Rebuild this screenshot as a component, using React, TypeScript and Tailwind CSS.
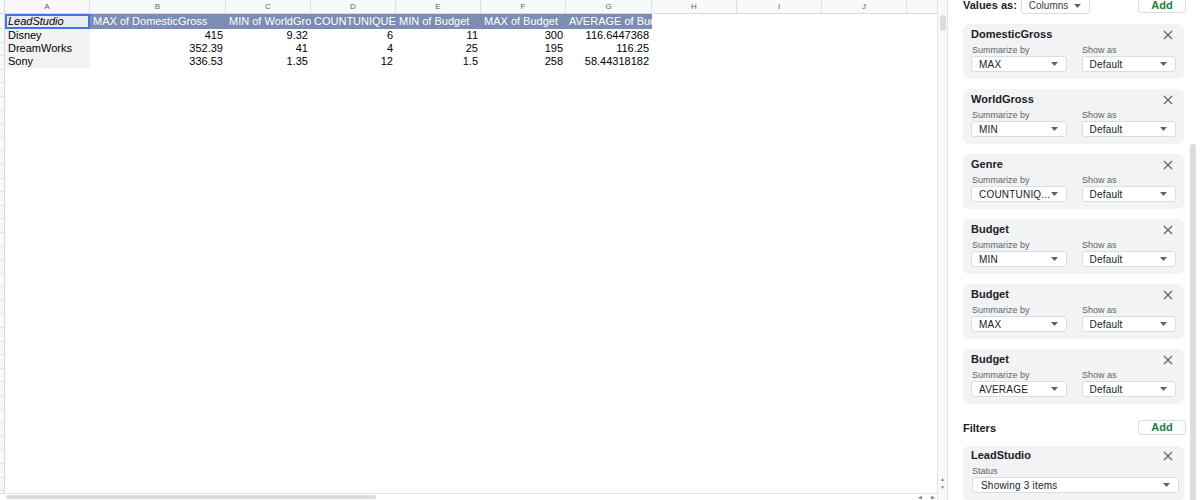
import React from "react";

const font = { fontFamily: '"Liberation Sans", Arial, sans-serif' };

const columns = [
  { label: "A", w: "w-[85px]" },
  { label: "B", w: "w-[136px]" },
  { label: "C", w: "w-[85px]" },
  { label: "D", w: "w-[85px]" },
  { label: "E", w: "w-[85px]" },
  { label: "F", w: "w-[85px]" },
  { label: "G", w: "w-[86px]" },
  { label: "H", w: "w-[85px]" },
  { label: "I", w: "w-[85px]" },
  { label: "J", w: "w-[85px]" },
];

const headers = [
  "MAX of DomesticGross",
  "MIN of WorldGross",
  "COUNTUNIQUE of Genre",
  "MIN of Budget",
  "MAX of Budget",
  "AVERAGE of Budget",
];

const rows = [
  ["Disney", "415", "9.32", "6", "11", "300", "116.6447368"],
  ["DreamWorks", "352.39", "41", "4", "25", "195", "116.25"],
  ["Sony", "336.53", "1.35", "12", "1.5", "258", "58.44318182"],
];

const values = [
  ["DomesticGross", "MAX"],
  ["WorldGross", "MIN"],
  ["Genre", "COUNTUNIQ..."],
  ["Budget", "MIN"],
  ["Budget", "MAX"],
  ["Budget", "AVERAGE"],
];

function Caret() {
  return (
    <svg width="7" height="4" viewBox="0 0 7 4" className="shrink-0">
      <path d="M0 0h7L3.5 4z" fill="#5f6368" />
    </svg>
  );
}

function Close() {
  return (
    <svg width="10" height="10" viewBox="0 0 10 10" className="shrink-0">
      <path d="M1 1l8 8M9 1l-8 8" stroke="#5f6368" strokeWidth="1.2" />
    </svg>
  );
}

function Select({ text, className }: { text: string; className: string }) {
  return (
    <div
      className={`flex h-[16px] items-center justify-between rounded-[3px] border border-[#dadce0] bg-white pl-[7px] pr-[8px] text-[10px] text-[#202124] ${className}`}
    >
      <span className="truncate tracking-[0.2px]">{text}</span>
      <Caret />
    </div>
  );
}

function ValueCard({ title, fn }: { title: string; fn: string }) {
  return (
    <div className="h-[55px] w-[221px] rounded-[6px] bg-[#f1f3f4] pl-[8px] pr-[8px] pt-[4px]">
      <div className="flex h-[13px] items-center justify-between pr-[3px]">
        <span className="text-[11px] font-bold text-[#202124]">{title}</span>
        <Close />
      </div>
      <div className="mt-[4px] flex h-[10px] text-[9px] leading-[10px] text-[#5f6368]">
        <span className="w-[111px] pl-[1px]">Summarize by</span>
        <span>Show as</span>
      </div>
      <div className="mt-[1px] flex">
        <Select text={fn} className="w-[96px]" />
        <Select text="Default" className="ml-[15px] w-[95px]" />
      </div>
    </div>
  );
}

function Grid() {
  return (
    <div className="flex h-full w-[937px] flex-col overflow-hidden">
      <div className="flex h-[14px] shrink-0 border-b border-[#d9d9d9] bg-[#f8f9fa]">
        <div className="w-[5px] shrink-0 border-r border-[#d9d9d9]" />
        {columns.map((c) => (
          <div
            key={c.label}
            className={`${c.w} flex shrink-0 items-center justify-center border-r border-[#e0e0e0] text-[8px] text-[#5f6368]`}
          >
            {c.label}
          </div>
        ))}
        <div className="flex-1" />
      </div>
      <div className="flex min-h-0 flex-1">
        <div className="flex w-[5px] shrink-0 flex-col border-r border-[#d9d9d9] bg-[#f8f9fa]">
          <div className="h-[15px] shrink-0 border-b border-[#e1e1e1]" />
          {Array.from({ length: 34 }).map((_, i) => (
            <div key={i} className="h-[13.6px] shrink-0 border-b border-[#e1e1e1]" />
          ))}
        </div>
        <div className="flex-1 bg-white text-[11px] text-black">
          <div className="flex h-[15px]">
            <div className="flex w-[85px] shrink-0 items-center border-2 border-[#3b78e7] bg-[#e8ebf2] pl-[1px] italic">
              LeadStudio
            </div>
            {headers.map((h, i) => (
              <div
                key={h}
                className={`${columns[i + 1].w} flex shrink-0 items-center overflow-hidden whitespace-nowrap bg-[#7b8db3] pl-[3px] text-white`}
              >
                {h}
              </div>
            ))}
          </div>
          {rows.map((r) => (
            <div key={r[0]} className="flex h-[13px]">
              <div className="flex w-[85px] shrink-0 items-center bg-[#f3f3f3] pl-[3px]">{r[0]}</div>
              {r.slice(1).map((v, i) => (
                <div
                  key={i}
                  className={`${columns[i + 1].w} flex shrink-0 items-center justify-end pr-[3px]`}
                >
                  {v}
                </div>
              ))}
            </div>
          ))}
        </div>
      </div>
      <div className="flex h-[7px] shrink-0 items-center border-t border-[#e3e3e3] bg-white pl-[6px]">
        <div className="h-[4px] w-[370px] rounded-full bg-[#dadce0]" />
        <div className="flex-1" />
        <div className="mr-[2px] flex gap-[9px] text-[5px] leading-none text-[#80868b]">
          <span>◀</span>
          <span>▶</span>
        </div>
      </div>
    </div>
  );
}

export default function App() {
  return (
    <div className="flex h-[500px] w-[1200px] overflow-hidden bg-white" style={font}>
      <Grid />
      <div className="flex h-full w-[11px] shrink-0 flex-col items-center border-l border-r border-[#e3e3e3] bg-[#f8f9fa]">
        <div className="mt-[15px] h-[16px] w-[6px] rounded-full bg-[#dadce0]" />
        <div className="flex-1" />
        <div className="mb-[10px] flex flex-col gap-[3px] text-[5px] leading-none text-[#80868b]">
          <span>▲</span>
          <span>▼</span>
        </div>
      </div>
      <div className="flex flex-1 overflow-hidden">
        <div className="flex w-[238px] shrink-0 flex-col pl-[15px]">
          <div className="-mt-[3px] flex h-[17px] items-center">
            <span className="text-[11px] font-bold text-[#202124]">Values as:</span>
            <div className="ml-[4px] flex h-[17px] w-[69px] items-center justify-between rounded-[3px] border border-[#dadce0] pl-[7px] pr-[8px] text-[10px] text-[#3c4043]">
              <span>Columns</span>
              <Caret />
            </div>
            <div className="ml-auto flex h-[15px] w-[48px] items-center justify-center rounded-[3px] border border-[#dadce0] bg-white text-[11px] font-bold text-[#188038]">
              Add
            </div>
          </div>
          <div className="mt-[10px] flex flex-col gap-[10px]">
            {values.map(([t, f], i) => (
              <ValueCard key={i} title={t} fn={f} />
            ))}
          </div>
          <div className="mt-[16px] flex h-[15px] items-center">
            <span className="mt-[2px] text-[11px] font-bold text-[#202124]">Filters</span>
            <div className="ml-auto flex h-[15px] w-[48px] items-center justify-center rounded-[3px] border border-[#dadce0] bg-white text-[11px] font-bold text-[#188038]">
              Add
            </div>
          </div>
          <div className="mt-[11px] h-[60px] w-[221px] rounded-[6px] bg-[#f1f3f4] px-[8px] pt-[3px]">
            <div className="flex h-[13px] items-center justify-between pr-[3px]">
              <span className="text-[11px] font-bold text-[#202124]">LeadStudio</span>
              <Close />
            </div>
            <div className="mt-[4px] h-[10px] pl-[1px] text-[9px] leading-[10px] text-[#5f6368]">Status</div>
            <div className="mt-[1px] pl-[1px]">
              <Select text="Showing 3 items" className="w-[207px] pl-[8px]" />
            </div>
          </div>
        </div>
        <div className="flex flex-1 justify-center">
          <div className="mt-[144px] h-full w-[6px] rounded-t-full bg-[#dadce0]" />
        </div>
      </div>
    </div>
  );
}
